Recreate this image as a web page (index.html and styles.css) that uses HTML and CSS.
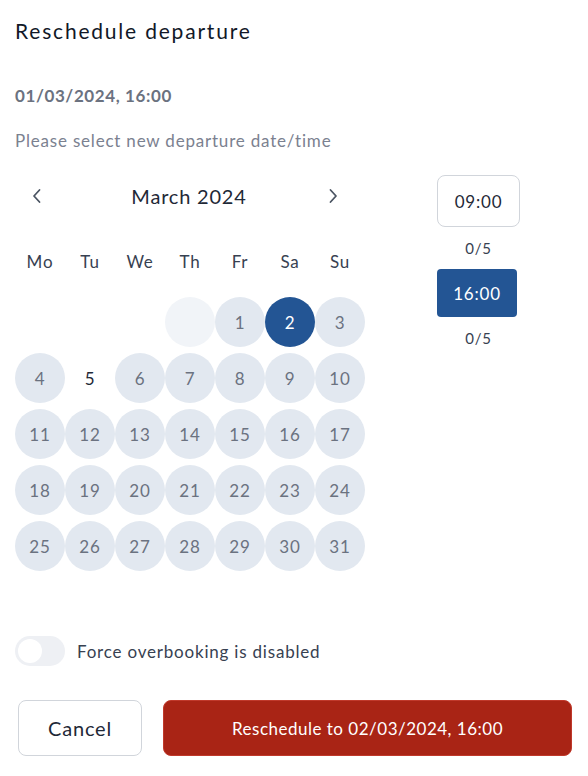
FILE: index.html
```html
<!DOCTYPE html>
<html lang="en">
<head>
    <meta charset="UTF-8">
    <meta name="viewport" content="width=device-width, initial-scale=1.0">
    <title>Reschedule departure</title>
    <link rel="stylesheet" href="styles.css">
</head>
<body>
    <div class="modal">
        <h1 class="title">Reschedule departure</h1>
        <div class="current">01/03/2024, 16:00</div>
        <p class="hint">Please select new departure date/time</p>

        <div class="picker">
            <div class="calendar">
                <div class="cal-head">
                    <button class="nav">
                        <svg width="10" height="16" viewBox="0 0 10 16"><path d="M7.5 2 L2 8 L7.5 14" fill="none" stroke="#4b5563" stroke-width="1.8" stroke-linecap="round" stroke-linejoin="round"/></svg>
                    </button>
                    <div class="month">March 2024</div>
                    <button class="nav">
                        <svg width="10" height="16" viewBox="0 0 10 16"><path d="M2.5 2 L8 8 L2.5 14" fill="none" stroke="#4b5563" stroke-width="1.8" stroke-linecap="round" stroke-linejoin="round"/></svg>
                    </button>
                </div>
                <div class="weekdays">
                    <span>Mo</span><span>Tu</span><span>We</span><span>Th</span><span>Fr</span><span>Sa</span><span>Su</span>
                </div>
                <div class="days">
                    <span class="day empty"></span>
                    <span class="day empty"></span>
                    <span class="day empty"></span>
                    <span class="day past"></span>
                    <span class="day">1</span>
                    <span class="day selected">2</span>
                    <span class="day">3</span>
                    <span class="day">4</span>
                    <span class="day plain">5</span>
                    <span class="day">6</span>
                    <span class="day">7</span>
                    <span class="day">8</span>
                    <span class="day">9</span>
                    <span class="day">10</span>
                    <span class="day">11</span>
                    <span class="day">12</span>
                    <span class="day">13</span>
                    <span class="day">14</span>
                    <span class="day">15</span>
                    <span class="day">16</span>
                    <span class="day">17</span>
                    <span class="day">18</span>
                    <span class="day">19</span>
                    <span class="day">20</span>
                    <span class="day">21</span>
                    <span class="day">22</span>
                    <span class="day">23</span>
                    <span class="day">24</span>
                    <span class="day">25</span>
                    <span class="day">26</span>
                    <span class="day">27</span>
                    <span class="day">28</span>
                    <span class="day">29</span>
                    <span class="day">30</span>
                    <span class="day">31</span>
                </div>
            </div>

            <div class="times">
                <button class="slot">09:00</button>
                <div class="count">0/5</div>
                <button class="slot active">16:00</button>
                <div class="count">0/5</div>
            </div>
        </div>

        <div class="toggle-row">
            <span class="toggle"><span class="knob"></span></span>
            <span class="toggle-label">Force overbooking is disabled</span>
        </div>

        <div class="actions">
            <button class="btn cancel">Cancel</button>
            <button class="btn confirm">Reschedule to 02/03/2024, 16:00</button>
        </div>
    </div>
</body>
</html>
```

FILE: styles.css
```css
body {
    margin: 0;
    font-family: Lato, "Open Sans", sans-serif;
    letter-spacing: 0.8px;
    color: #1f2937;
    background-color: #fff;
}
button {
    font-family: inherit;
    letter-spacing: inherit;
}
.modal {
    padding: 14px 16px 0 15px;
}
.title {
    margin: 0;
    font-size: 21px;
    font-weight: 400;
    line-height: 34px;
    letter-spacing: 1.8px;
    color: #111827;
}
.current {
    margin-top: 36px;
    font-size: 17px;
    font-weight: 700;
    line-height: 24px;
    letter-spacing: 0.6px;
    color: #6b7280;
}
.hint {
    margin: 21px 0 0;
    font-size: 17px;
    line-height: 24px;
    color: #7b8190;
}
.picker {
    display: flex;
    gap: 72px;
    margin-top: 20px;
}
.calendar {
    width: 350px;
}
.cal-head {
    display: flex;
    align-items: center;
    justify-content: space-between;
    height: 46px;
    padding: 0 23px 0 13px;
}
.nav {
    border: none;
    background: none;
    padding: 4px;
    display: flex;
    cursor: pointer;
}
.month {
    margin-left: 8px;
    font-size: 20px;
    color: #1f2937;
}
.weekdays {
    display: grid;
    grid-template-columns: repeat(7, 50px);
    margin-top: 31px;
    height: 24px;
    line-height: 24px;
    text-align: center;
    font-size: 17px;
    color: #374151;
}
.days {
    display: grid;
    grid-template-columns: repeat(7, 50px);
    grid-auto-rows: 50px;
    row-gap: 6px;
    margin-top: 23px;
}
.day {
    display: flex;
    align-items: center;
    justify-content: center;
    border-radius: 50%;
    background-color: #e2e8f0;
    color: #6b7280;
    font-size: 17px;
}
.day.empty {
    background: none;
}
.day.past {
    background-color: #f1f4f8;
}
.day.plain {
    background: none;
    color: #1f2937;
}
.day.selected {
    background-color: #235594;
    color: #fff;
}
.times {
    display: flex;
    flex-direction: column;
    align-items: flex-start;
    padding-top: 2px;
}
.slot {
    width: 83px;
    height: 52px;
    border: 1px solid #d1d5db;
    border-radius: 8px;
    background-color: #fff;
    font-size: 17px;
    color: #1f2937;
    cursor: pointer;
}
.slot.active {
    width: 80px;
    height: 48px;
    border: none;
    border-radius: 4px;
    background-color: #235594;
    color: #fff;
}
.count {
    width: 83px;
    text-align: center;
    font-size: 15px;
    line-height: 22px;
    color: #374151;
    margin: 10px 0 10px;
}
.toggle-row {
    display: flex;
    align-items: center;
    gap: 12px;
    margin-top: 65px;
}
.toggle {
    width: 50px;
    height: 30px;
    border-radius: 15px;
    background-color: #eef0f4;
    display: flex;
    align-items: center;
    padding-left: 3px;
    box-sizing: border-box;
}
.knob {
    width: 24px;
    height: 24px;
    border-radius: 50%;
    background-color: #fff;
}
.toggle-label {
    font-size: 17px;
    color: #374151;
}
.actions {
    display: flex;
    gap: 21px;
    margin-top: 34px;
    padding-left: 3px;
}
.btn {
    height: 56px;
    border-radius: 8px;
    font-size: 17px;
    cursor: pointer;
}
.cancel {
    width: 124px;
    border: 1px solid #d1d5db;
    background-color: #fff;
    color: #1f2937;
    font-size: 20px;
}
.confirm {
    flex: 1;
    border: 1px solid #c0392b;
    background-color: #a92415;
    color: #fff;
    letter-spacing: 0.5px;
}
```
